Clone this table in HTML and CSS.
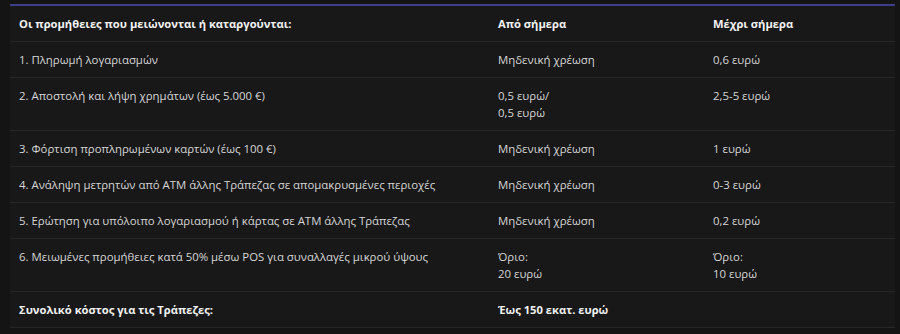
FILE: index.html
```html
<!DOCTYPE html>
<html lang="el">
<head>
<meta charset="utf-8">
<link rel="stylesheet" href="styles.css">
</head>
<body>
<div class="wrap">
<table class="fees">
<thead>
<tr><th class="c1">Οι προμήθειες που μειώνονται ή καταργούνται:</th><th class="c2">Από σήμερα</th><th class="c3">Μέχρι σήμερα</th></tr>
</thead>
<tbody>
<tr><td>1. Πληρωμή λογαριασμών</td><td>Μηδενική χρέωση</td><td>0,6 ευρώ</td></tr>
<tr><td>2. Αποστολή και λήψη χρημάτων (έως 5.000 €)</td><td>0,5 ευρώ/<br>0,5 ευρώ</td><td>2,5-5 ευρώ</td></tr>
<tr><td>3. Φόρτιση προπληρωμένων καρτών (έως 100 €)</td><td>Μηδενική χρέωση</td><td>1 ευρώ</td></tr>
<tr><td>4. Ανάληψη μετρητών από ATM άλλης Τράπεζας σε απομακρυσμένες περιοχές</td><td>Μηδενική χρέωση</td><td>0-3 ευρώ</td></tr>
<tr><td>5. Ερώτηση για υπόλοιπο λογαριασμού ή κάρτας σε ATM άλλης Τράπεζας</td><td>Μηδενική χρέωση</td><td>0,2 ευρώ</td></tr>
<tr><td>6. Μειωμένες προμήθειες κατά 50% μέσω POS για συναλλαγές μικρού ύψους</td><td>Όριο:<br>20 ευρώ</td><td>Όριο:<br>10 ευρώ</td></tr>
<tr class="total"><td>Συνολικό κόστος για τις Τράπεζες:</td><td>Έως 150 εκατ. ευρώ</td><td></td></tr>
</tbody>
</table>
</div>
</body>
</html>
```
FILE: styles.css
```css
html, body {
  margin: 0;
  background: #141414;
}
.wrap {
  padding: 4px 5px 0 10px;
}
.fees {
  width: 885px;
  border-collapse: collapse;
  background: #181818;
  border-top: 2px solid #3b4089;
  font-family: "Open Sans", "Noto Sans", sans-serif;
  font-size: 11.4px;
  line-height: 17px;
  color: #d6d6d6;
}
.fees th, .fees td {
  text-align: left;
  vertical-align: top;
  padding: 9px;
  border-bottom: 1px solid #262626;
}
.fees th {
  font-weight: 700;
  font-size: 11.2px;
  color: #f2f2f2;
}
.c1 { width: 461px; }
.c2 { width: 197px; }
.fees .total td {
  font-weight: 700;
  font-size: 11.2px;
  color: #f2f2f2;
}
```
